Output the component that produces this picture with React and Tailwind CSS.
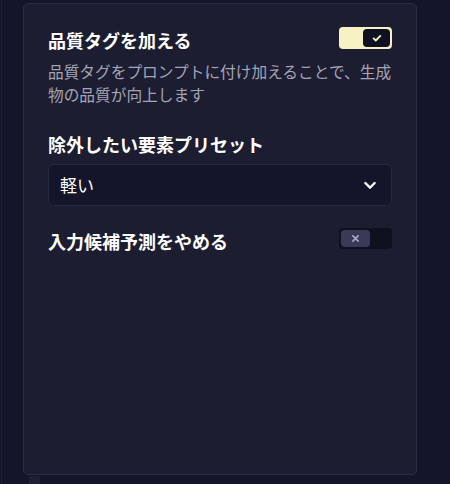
import React from "react";

function Check() {
  return (
    <svg width="10" height="10" viewBox="0 0 24 24" fill="none" stroke="#f6f2c4" strokeWidth="4.5" strokeLinecap="round" strokeLinejoin="round">
      <path d="M4 13l5 5L20 7" />
    </svg>
  );
}

function XIcon() {
  return (
    <svg width="9" height="9" viewBox="0 0 24 24" fill="none" stroke="#a7a8c2" strokeWidth="4.5" strokeLinecap="round">
      <path d="M5 5l14 14M19 5L5 19" />
    </svg>
  );
}

export default function App() {
  const font = { fontFamily: '"Noto Sans CJK JP", "Noto Sans", sans-serif' };
  return (
    <div className="relative w-[450px] h-[484px] overflow-hidden bg-[#14152a]" style={font}>
      <div className="absolute left-[1px] top-0 h-full w-px bg-[#1e2036]" />
      <div className="absolute left-[29px] top-[476px] h-[8px] w-[11px] bg-[#1d1f36]" />
      <div className="ml-[23px] mt-[3px] w-[394px] h-[472px] rounded-[5px] border border-[#2a2c44] bg-[#1c1d31] px-6 pt-[23px]">
        <div className="flex items-start justify-between">
          <div className="text-[18px] leading-[26px] font-bold text-white">品質タグを加える</div>
          <div className="flex h-[22px] w-[53px] items-center justify-end rounded-[4px] bg-[#f6f2c4] p-[2px]">
            <div className="flex h-[18px] w-[27px] items-center justify-center rounded-[4px] bg-[#0f1022]">
              <Check />
            </div>
          </div>
        </div>
        <p className="mt-[7px] text-[15.7px] leading-[23px] text-[#a4a4b6]">
          品質タグをプロンプトに付け加えることで、生成物の品質が向上します
        </p>
        <div className="mt-[25px] text-[18px] leading-[26px] font-bold text-white">除外したい要素プリセット</div>
        <div className="mt-[7px] flex h-[42px] items-center justify-between rounded-[6px] border border-[#272940] bg-[#14152a] pl-[11px] pr-[13px]">
          <span className="text-[17px] text-white">軽い</span>
          <svg width="16" height="16" viewBox="0 0 24 24" fill="none" stroke="white" strokeWidth="3.5" strokeLinecap="round" strokeLinejoin="round">
            <path d="M5 9l7 7 7-7" />
          </svg>
        </div>
        <div className="mt-[22px] flex items-start justify-between">
          <div className="text-[18px] leading-[26px] font-bold text-white">入力候補予測をやめる</div>
          <div className="flex h-[21px] w-[53px] items-center justify-start rounded-[4px] bg-[#10111e] p-[2px]">
            <div className="flex h-[17px] w-[29px] items-center justify-center rounded-[4px] bg-[#393a58]">
              <XIcon />
            </div>
          </div>
        </div>
      </div>
    </div>
  );
}
